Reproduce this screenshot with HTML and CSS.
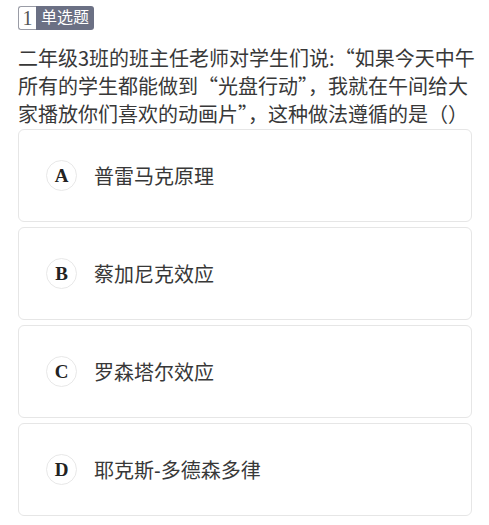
FILE: index.html
```html
<!DOCTYPE html>
<html lang="zh-CN">
<head>
  <meta charset="UTF-8">
  <meta name="viewport" content="width=device-width, initial-scale=1.0">
  <title>单选题</title>
  <link rel="stylesheet" href="styles.css">
</head>
<body>
  <div class="question">
    <div class="q-tag">
      <span class="q-num">1</span>
      <span class="q-type">单选题</span>
    </div>
    <p class="q-title">二年级3班的班主任老师对学生们说:“如果今天中午所有的学生都能做到“光盘行动”，我就在午间给大家播放你们喜欢的动画片”，这种做法遵循的是（）</p>

    <div class="options">
      <div class="option">
        <span class="letter">A</span>
        <span class="text">普雷马克原理</span>
      </div>
      <div class="option">
        <span class="letter">B</span>
        <span class="text">蔡加尼克效应</span>
      </div>
      <div class="option">
        <span class="letter">C</span>
        <span class="text">罗森塔尔效应</span>
      </div>
      <div class="option">
        <span class="letter">D</span>
        <span class="text">耶克斯-多德森多律</span>
      </div>
    </div>
  </div>
</body>
</html>
```

FILE: styles.css
```css
body {
  margin: 0;
  padding: 0;
  background-color: #fff;
  font-family: "Liberation Sans", "Noto Sans CJK SC", sans-serif;
  color: #333;
}

.question {
  padding: 6px 17px 0 18px;
}

.q-tag {
  display: flex;
  height: 24px;
}

.q-num {
  width: 17px;
  border: 1px solid #9a9ca6;
  border-right: none;
  border-radius: 3px 0 0 3px;
  font-family: "Liberation Serif", serif;
  font-size: 20px;
  line-height: 22px;
  text-align: center;
  color: #555;
}

.q-type {
  background-color: #6b7084;
  color: #fff;
  font-size: 16px;
  line-height: 24px;
  padding: 0 5px;
  border-radius: 0 3px 3px 0;
}

.q-title {
  margin: 14px -8px 1px 0;
  font-family: "Noto Sans CJK SC", sans-serif;
  font-size: 20px;
  line-height: 28px;
  color: #383838;
}

.options {
  display: flex;
  flex-direction: column;
  gap: 5px;
}

.option {
  display: flex;
  align-items: center;
  height: 91px;
  padding: 0 27px;
  border: 1px solid #e6e6e6;
  border-radius: 6px;
}

.letter {
  width: 29px;
  height: 29px;
  border: 1px solid #e8e8e8;
  border-radius: 50%;
  display: flex;
  align-items: center;
  justify-content: center;
  font-family: "Liberation Serif", serif;
  font-weight: bold;
  font-size: 19px;
  color: #222;
}

.text {
  margin-left: 17px;
  font-size: 20px;
  color: #383838;
}
```
